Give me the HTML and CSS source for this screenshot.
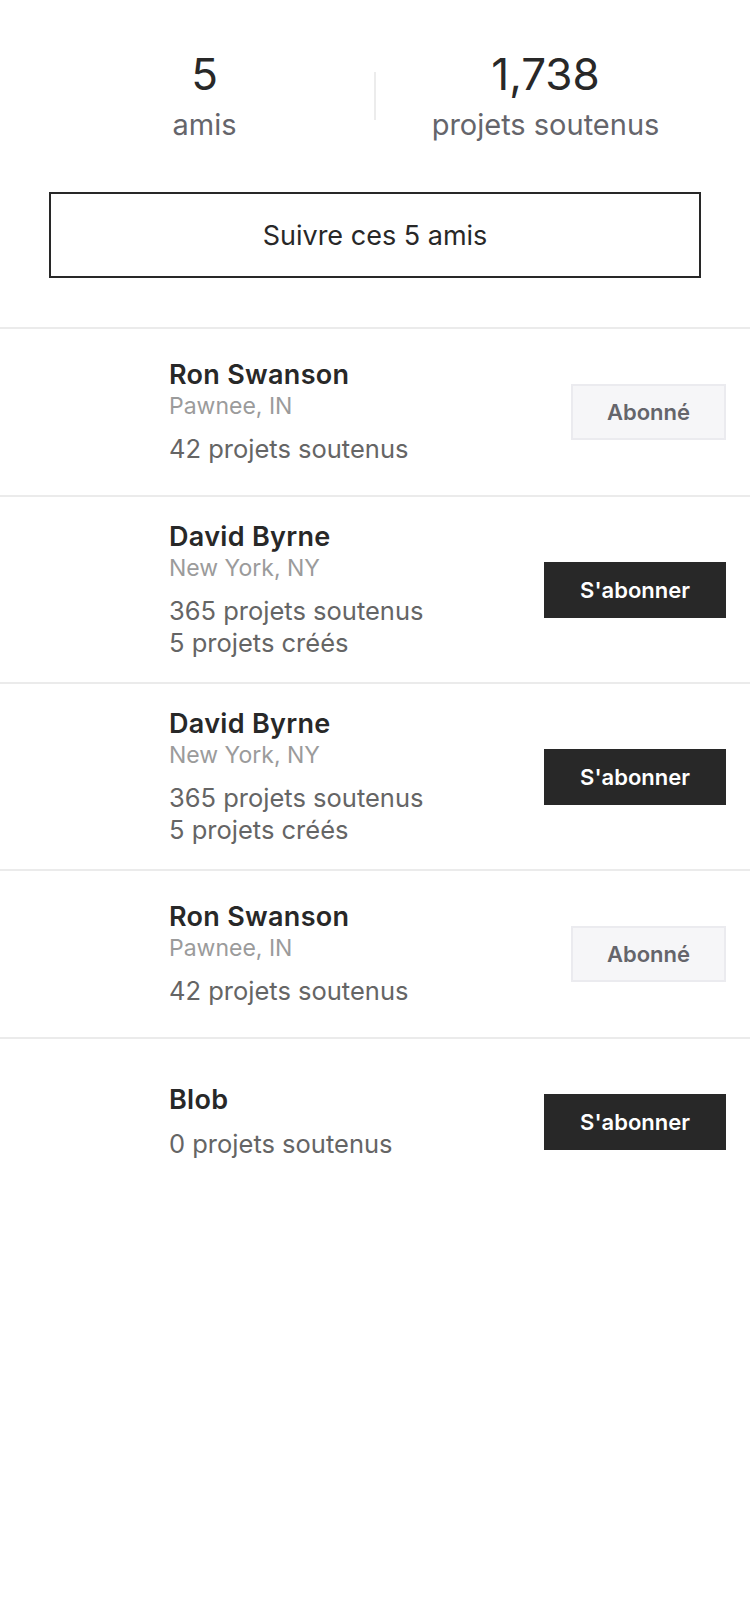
FILE: index.html
```html
<!DOCTYPE html>
<html lang="fr">
<head>
<meta charset="utf-8">
<title>Amis</title>
<link rel="stylesheet" href="styles.css">
</head>
<body>
<div class="page">
  <section class="summary">
    <div class="stats">
      <div class="stat">
        <div class="stat-value">5</div>
        <div class="stat-label">amis</div>
      </div>
      <div class="stat-divider"></div>
      <div class="stat">
        <div class="stat-value">1,738</div>
        <div class="stat-label">projets soutenus</div>
      </div>
    </div>
    <button class="follow-all">Suivre ces 5 amis</button>
  </section>

  <ul class="friends">
    <li class="friend">
      <div class="avatar"></div>
      <div class="info">
        <div class="name">Ron Swanson</div>
        <div class="location">Pawnee, IN</div>
        <div class="counts">
          <div>42 projets soutenus</div>
        </div>
      </div>
      <button class="btn btn-following">Abonné</button>
    </li>
    <li class="friend">
      <div class="avatar"></div>
      <div class="info">
        <div class="name">David Byrne</div>
        <div class="location">New York, NY</div>
        <div class="counts">
          <div>365 projets soutenus</div>
          <div>5 projets créés</div>
        </div>
      </div>
      <button class="btn btn-follow">S'abonner</button>
    </li>
    <li class="friend">
      <div class="avatar"></div>
      <div class="info">
        <div class="name">David Byrne</div>
        <div class="location">New York, NY</div>
        <div class="counts">
          <div>365 projets soutenus</div>
          <div>5 projets créés</div>
        </div>
      </div>
      <button class="btn btn-follow">S'abonner</button>
    </li>
    <li class="friend">
      <div class="avatar"></div>
      <div class="info">
        <div class="name">Ron Swanson</div>
        <div class="location">Pawnee, IN</div>
        <div class="counts">
          <div>42 projets soutenus</div>
        </div>
      </div>
      <button class="btn btn-following">Abonné</button>
    </li>
    <li class="friend">
      <div class="avatar"></div>
      <div class="info">
        <div class="name">Blob</div>
        <div class="counts">
          <div>0 projets soutenus</div>
        </div>
      </div>
      <button class="btn btn-follow">S'abonner</button>
    </li>
  </ul>
</div>
</body>
</html>
```

FILE: styles.css
```css
* {
  box-sizing: border-box;
}

html, body {
  margin: 0;
  padding: 0;
  background: #ffffff;
}

body {
  font-family: Inter, "Noto Sans", "Liberation Sans", sans-serif;
  color: #282828;
  -webkit-font-smoothing: antialiased;
}

.page {
  width: 750px;
  min-height: 1624px;
}

.summary {
  padding: 48px 49px 49px;
  border-bottom: 2px solid #ebebeb;
}

.stats {
  display: flex;
  align-items: center;
  margin: 0 -14px;
}

.stat {
  flex: 1;
  text-align: center;
}

.stat-value {
  font-size: 44px;
  line-height: 52px;
  font-weight: 400;
  color: #282828;
}

.stat-label {
  margin-top: 7px;
  font-size: 29px;
  line-height: 36px;
  color: #65656b;
}

.stat-divider {
  width: 2px;
  height: 48px;
  background: #ececec;
}

.follow-all {
  display: block;
  width: 100%;
  height: 86px;
  margin-top: 49px;
  border: 2px solid #282828;
  background: #ffffff;
  font-family: inherit;
  font-size: 27px;
  color: #282828;
  padding: 0;
}

.friends {
  list-style: none;
  margin: 0;
  padding: 0;
}

.friend {
  display: flex;
  align-items: center;
  padding: 24px;
  border-bottom: 2px solid #ebebeb;
}

.friend:last-child {
  border-bottom: none;
}

.avatar {
  flex: none;
  width: 120px;
  height: 118px;
  margin-right: 25px;
}

.info {
  flex: 1;
  min-width: 0;
}

.name {
  font-size: 27px;
  line-height: 32px;
  font-weight: 600;
  letter-spacing: 0.3px;
  color: #282828;
}

.location {
  font-size: 23px;
  line-height: 30px;
  color: #9b9b9b;
}

.counts {
  margin-top: 12px;
  font-size: 25.5px;
  line-height: 31.5px;
  color: #656565;
}

.btn {
  flex: none;
  height: 56px;
  padding: 0 34px;
  font-family: inherit;
  font-size: 22px;
  font-weight: 600;
  border: 2px solid transparent;
}

.btn-follow {
  background: #282828;
  border-color: #282828;
  color: #ffffff;
}

.btn-following {
  background: #f6f6f8;
  border-color: #ebebef;
  color: #65656b;
}
```
